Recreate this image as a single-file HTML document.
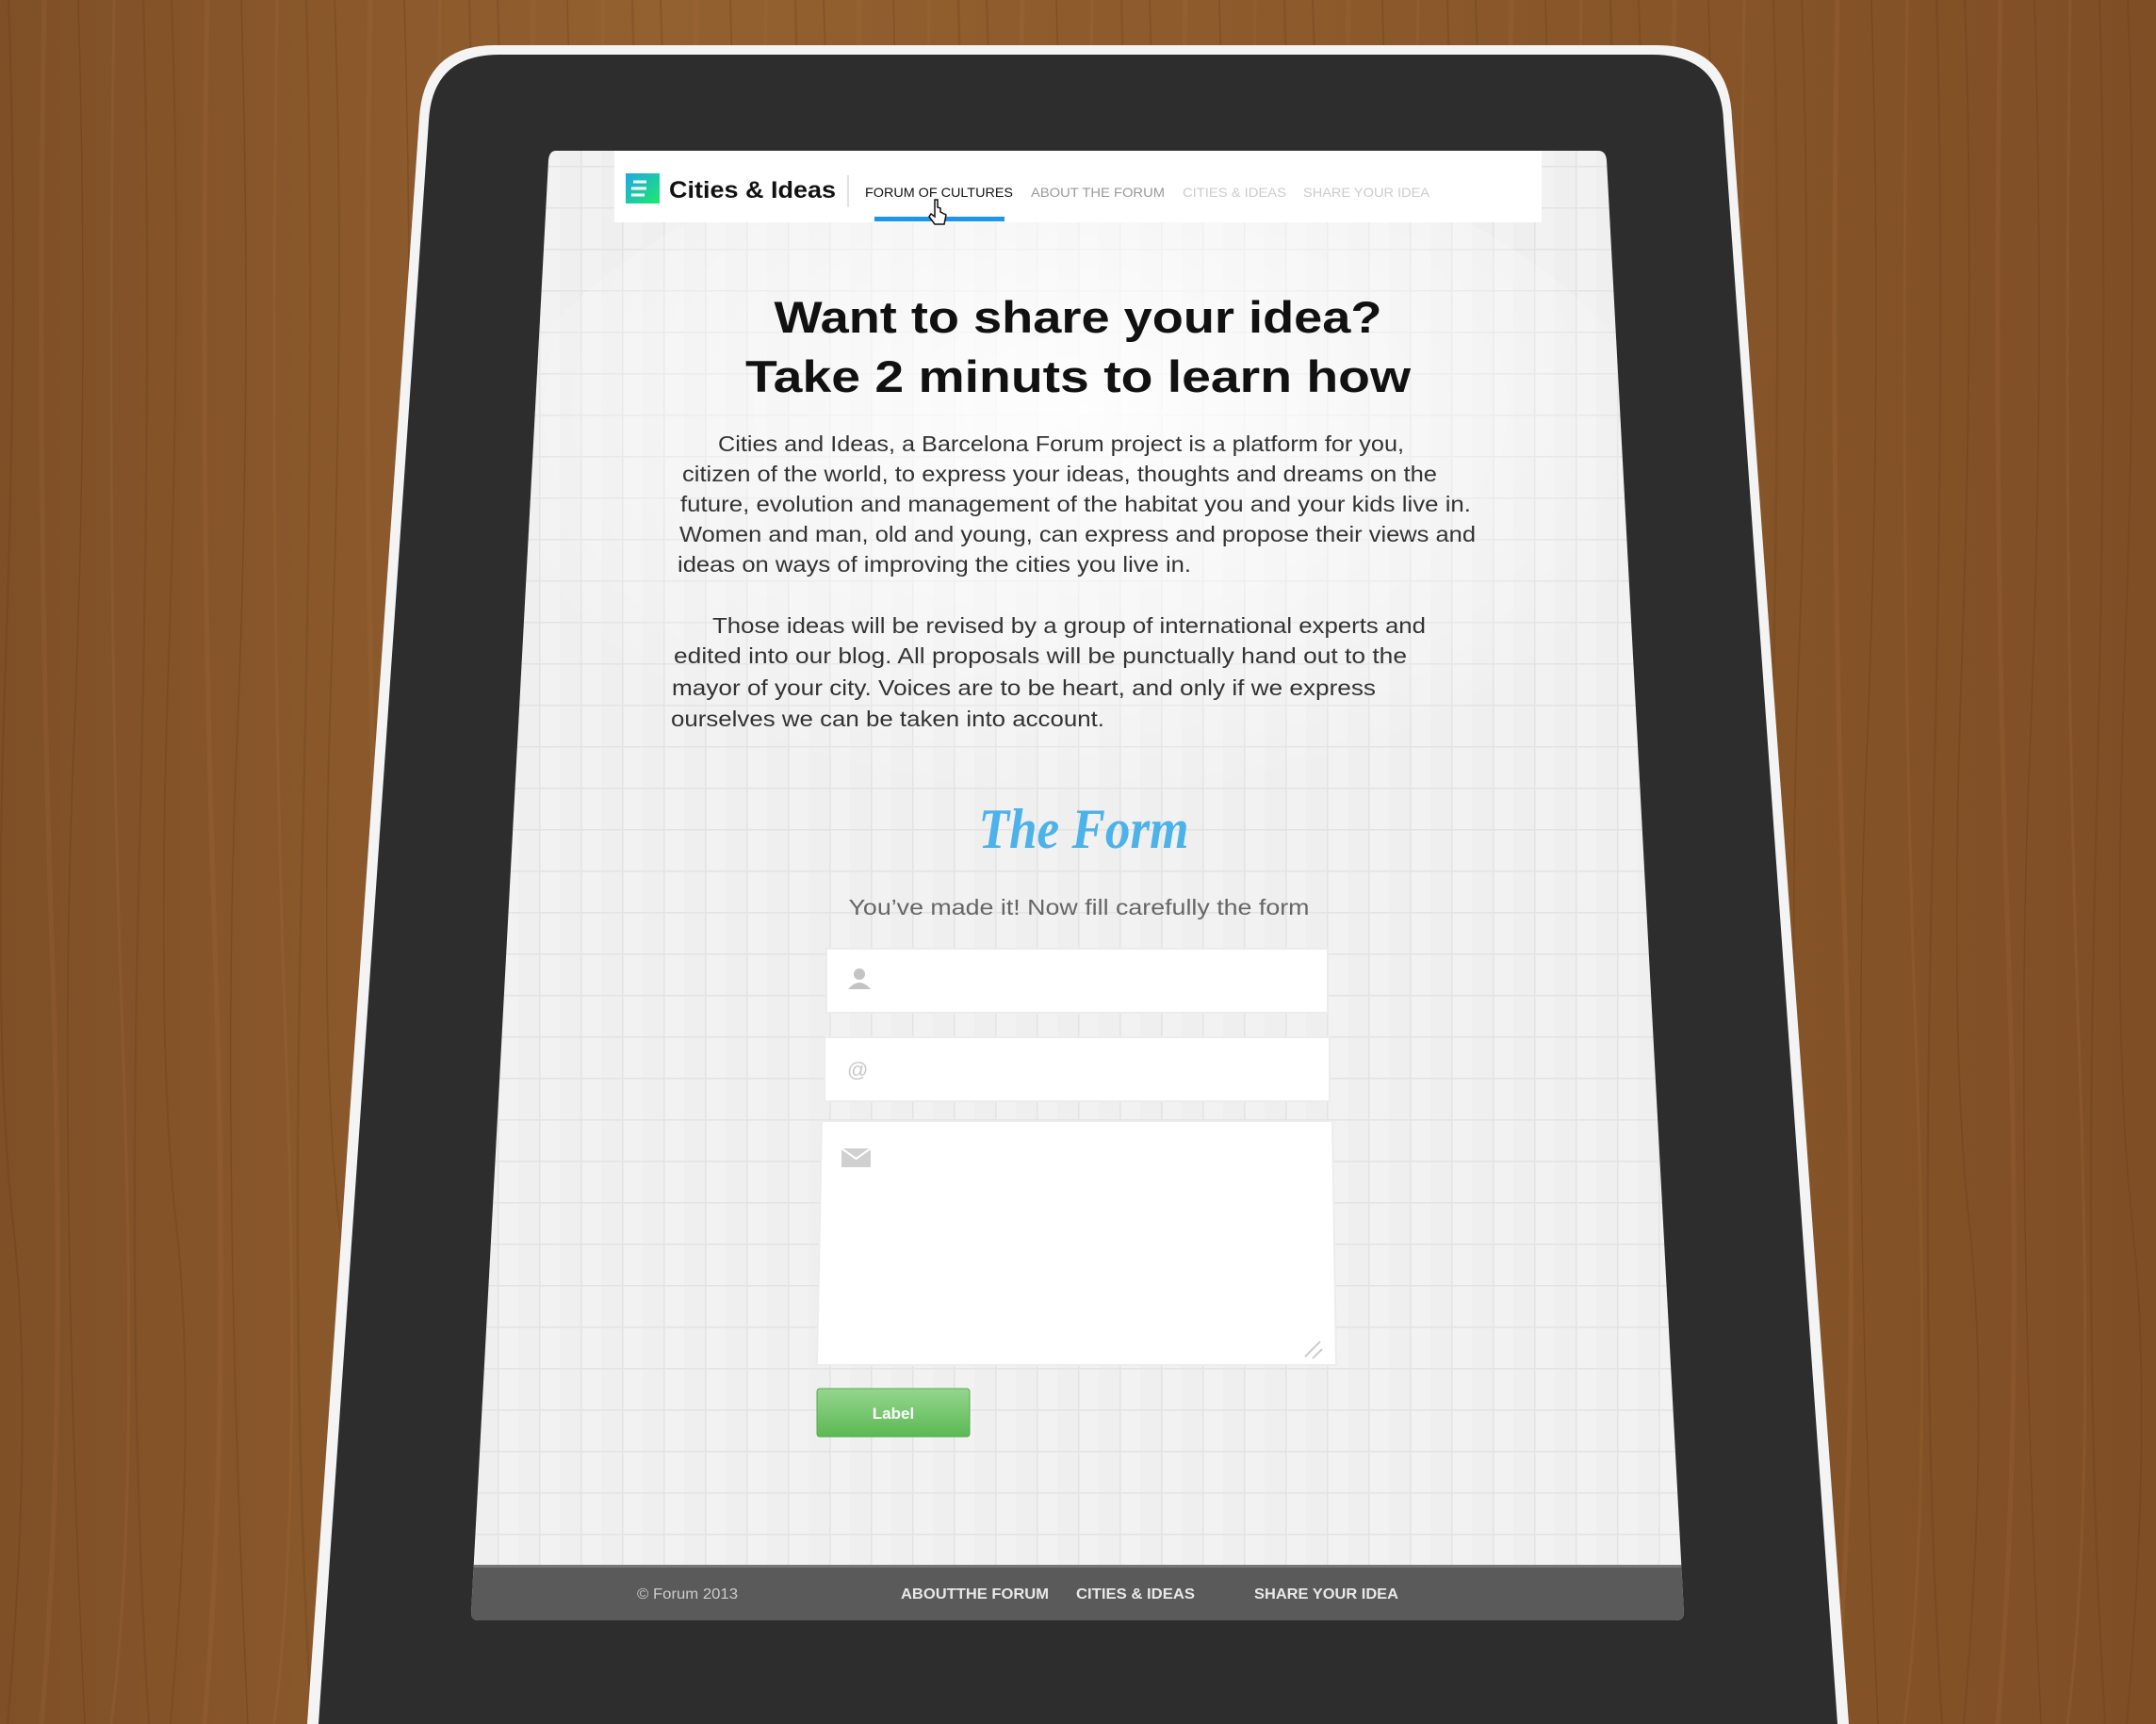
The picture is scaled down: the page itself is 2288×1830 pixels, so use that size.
<!DOCTYPE html>
<html><head><meta charset="utf-8"><style>
html,body{margin:0;padding:0;width:2288px;height:1830px;overflow:hidden;background:#87562c}
svg{display:block}
text{font-family:"Liberation Sans",sans-serif}
</style></head><body>
<svg width="2288" height="1830" viewBox="0 0 2288 1830" xmlns="http://www.w3.org/2000/svg">
<defs>
<linearGradient id="wood" x1="0" y1="0" x2="1" y2="0">
<stop offset="0" stop-color="#7f4f26"/><stop offset="0.3" stop-color="#93602f"/><stop offset="0.6" stop-color="#8c5a2b"/><stop offset="1" stop-color="#7f4e25"/></linearGradient>
<pattern id="grain" width="173" height="1830" patternUnits="userSpaceOnUse">
<path d="M9 0 Q20 300 6 700 T14 1300 T8 1830" stroke="#5e3515" stroke-width="2" fill="none" opacity=".25"/>
<path d="M47 0 Q38 500 55 1000 T44 1830" stroke="#a87040" stroke-width="5" fill="none" opacity=".2"/>
<path d="M83 0 Q95 400 78 800 T90 1830" stroke="#5e3515" stroke-width="1.5" fill="none" opacity=".3"/>
<path d="M121 0 Q112 600 130 1100 T118 1830" stroke="#a56c3a" stroke-width="3" fill="none" opacity=".22"/>
<path d="M152 0 Q162 350 148 900 T158 1830" stroke="#603717" stroke-width="2.5" fill="none" opacity=".22"/>
</pattern>
<pattern id="grid" width="44" height="44" patternUnits="userSpaceOnUse">
<rect width="44" height="44" fill="#efefef"/>
<rect x="0" y="0" width="22" height="44" fill="#f2f2f2"/>
<path d="M0 .5H44M.5 0V44" stroke="#e3e3e3" stroke-width="2"/>
</pattern>
<radialGradient id="glow" cx="0.5" cy="0.35" r="0.5">
<stop offset="0" stop-color="#fff" stop-opacity=".9"/><stop offset="1" stop-color="#fff" stop-opacity="0"/></radialGradient>
<linearGradient id="btn" x1="0" y1="0" x2="0" y2="1"><stop offset="0" stop-color="#95d68f"/><stop offset="1" stop-color="#5bb952"/></linearGradient>
<linearGradient id="logo" x1="0" y1="0" x2="1" y2="1"><stop offset="0" stop-color="#1fa8e8"/><stop offset="1" stop-color="#1ee86a"/></linearGradient>
</defs>
<rect width="2288" height="1830" fill="url(#wood)"/>
<rect width="2288" height="1830" fill="url(#grain)"/>
<path d="M525 48 L1758 48 Q1835 48 1838 125 L1962 1830 L326 1830 L445 125 Q450 48 525 48 Z" fill="#f4f4f4"/>
<path d="M530 58 L1753 58 Q1826 58 1829 128 L1950 1830 L338 1830 L455 128 Q459 58 530 58 Z" fill="#2d2d2d"/>
<clipPath id="scr"><path d="M590 160 L1696 160 Q1704 160 1705 170 L1787 1712 Q1787 1720 1778 1720 L508 1720 Q500 1720 500 1712 L582 170 Q583 160 590 160 Z"/></clipPath>
<g clip-path="url(#scr)">
<rect x="480" y="150" width="1330" height="1580" fill="url(#grid)"/>
<ellipse cx="1144" cy="560" rx="650" ry="420" fill="url(#glow)"/>
<rect x="652" y="160" width="984" height="76" fill="#fff"/>
<rect x="480" y="1661" width="1330" height="70" fill="#5a5a5a"/>
<rect x="480" y="1661" width="1330" height="3" fill="#777"/>
</g>
<g lengthAdjust="spacingAndGlyphs">
<rect x="664" y="184" width="36" height="32" fill="url(#logo)"/>
<path d="M672 193h14M670 200h16M670 207h14" stroke="#fff" stroke-width="3"/>
<text x="710" y="210" font-size="25" font-weight="bold" fill="#111" textLength="177" lengthAdjust="spacingAndGlyphs">Cities &amp; Ideas</text>
<line x1="900" y1="186" x2="900" y2="220" stroke="#e3e3e3" stroke-width="2"/>
<text x="918" y="209" font-size="14" fill="#111" textLength="157" lengthAdjust="spacingAndGlyphs">FORUM OF CULTURES</text>
<text x="1094" y="209" font-size="14" fill="#999" textLength="142" lengthAdjust="spacingAndGlyphs">ABOUT THE FORUM</text>
<text x="1255" y="209" font-size="14" fill="#ccc" textLength="110" lengthAdjust="spacingAndGlyphs">CITIES &amp; IDEAS</text>
<text x="1383" y="209" font-size="14" fill="#ccc" textLength="134" lengthAdjust="spacingAndGlyphs">SHARE YOUR IDEA</text>
<rect x="928" y="230" width="138" height="5" fill="#2196e8"/>
<path d="M992 212v18l-4-3-2 3 6 8h10l2-10-6-3v-4l-3-1v-8z" fill="#fff" stroke="#111" stroke-width="1.5"/>
<text x="1144" y="353" font-size="47" font-weight="bold" fill="#111" text-anchor="middle" textLength="645" lengthAdjust="spacingAndGlyphs">Want to share your idea?</text>
<text x="1144" y="416" font-size="47" font-weight="bold" fill="#111" text-anchor="middle" textLength="706" lengthAdjust="spacingAndGlyphs">Take 2 minuts to learn how</text>
<g font-size="23" fill="#333">
<text x="762" y="479" textLength="728" lengthAdjust="spacingAndGlyphs">Cities and Ideas, a Barcelona Forum project is a platform for you,</text>
<text x="724" y="511" textLength="801" lengthAdjust="spacingAndGlyphs">citizen of the world, to express your ideas, thoughts and dreams on the</text>
<text x="722" y="543" textLength="839" lengthAdjust="spacingAndGlyphs">future, evolution and management of the habitat you and your kids live in.</text>
<text x="721" y="575" textLength="845" lengthAdjust="spacingAndGlyphs">Women and man, old and young, can express and propose their views and</text>
<text x="719" y="607" textLength="545" lengthAdjust="spacingAndGlyphs">ideas on ways of improving the cities you live in.</text>
<text x="756" y="672" textLength="757" lengthAdjust="spacingAndGlyphs">Those ideas will be revised by a group of international experts and</text>
<text x="715" y="704" textLength="778" lengthAdjust="spacingAndGlyphs">edited into our blog. All proposals will be punctually hand out to the</text>
<text x="713" y="738" textLength="747" lengthAdjust="spacingAndGlyphs">mayor of your city.  Voices are to be heart, and only if we express</text>
<text x="712" y="771" textLength="460" lengthAdjust="spacingAndGlyphs">ourselves we can be taken into account.</text>
</g>
<text x="1150" y="900" font-size="60" font-style="italic" font-weight="bold" fill="#4cb2ea" text-anchor="middle" textLength="223" lengthAdjust="spacingAndGlyphs" style="font-family:'Liberation Serif',serif">The Form</text>
<text x="1145" y="971" font-size="23" fill="#666" text-anchor="middle" textLength="489" lengthAdjust="spacingAndGlyphs">You’ve made it! Now fill carefully the form</text>
<path d="M877 1007H1409V1075H877Z" fill="#fff" stroke="#ececec" stroke-width="2"/>
<path d="M875 1101H1411V1169H875Z" fill="#fff" stroke="#ececec" stroke-width="2"/>
<path d="M872 1190H1414L1418 1449H867Z" fill="#fff" stroke="#ececec" stroke-width="2"/>
<circle cx="912" cy="1034" r="6" fill="#c4c4c4"/><path d="M900 1050q12-14 24 0z" fill="#c4c4c4"/>
<text x="899" y="1143" font-size="22" fill="#c8c8c8">@</text>
<rect x="893" y="1219" width="31" height="20" fill="#d0d0d0"/><path d="M893 1219l15.5 11 15.5-11" stroke="#fff" stroke-width="2" fill="none"/>
<path d="M1385 1440l16-16M1393 1442l10-10" stroke="#ccc" stroke-width="2"/>
<rect x="867" y="1474" width="162" height="51" rx="3" fill="url(#btn)" stroke="#58a850"/>
<text x="948" y="1506" font-size="17" font-weight="bold" fill="#fff" text-anchor="middle">Label</text>
<g font-size="16" font-weight="bold" fill="#e8e8e8">
<text x="676" y="1697" font-weight="normal" fill="#ccc" textLength="107" lengthAdjust="spacingAndGlyphs">© Forum 2013</text>
<text x="956" y="1697" textLength="157" lengthAdjust="spacingAndGlyphs">ABOUTTHE FORUM</text>
<text x="1142" y="1697" textLength="126" lengthAdjust="spacingAndGlyphs">CITIES &amp; IDEAS</text>
<text x="1331" y="1697" textLength="153" lengthAdjust="spacingAndGlyphs">SHARE YOUR IDEA</text>
</g>
</g>
</svg>
</body></html>
